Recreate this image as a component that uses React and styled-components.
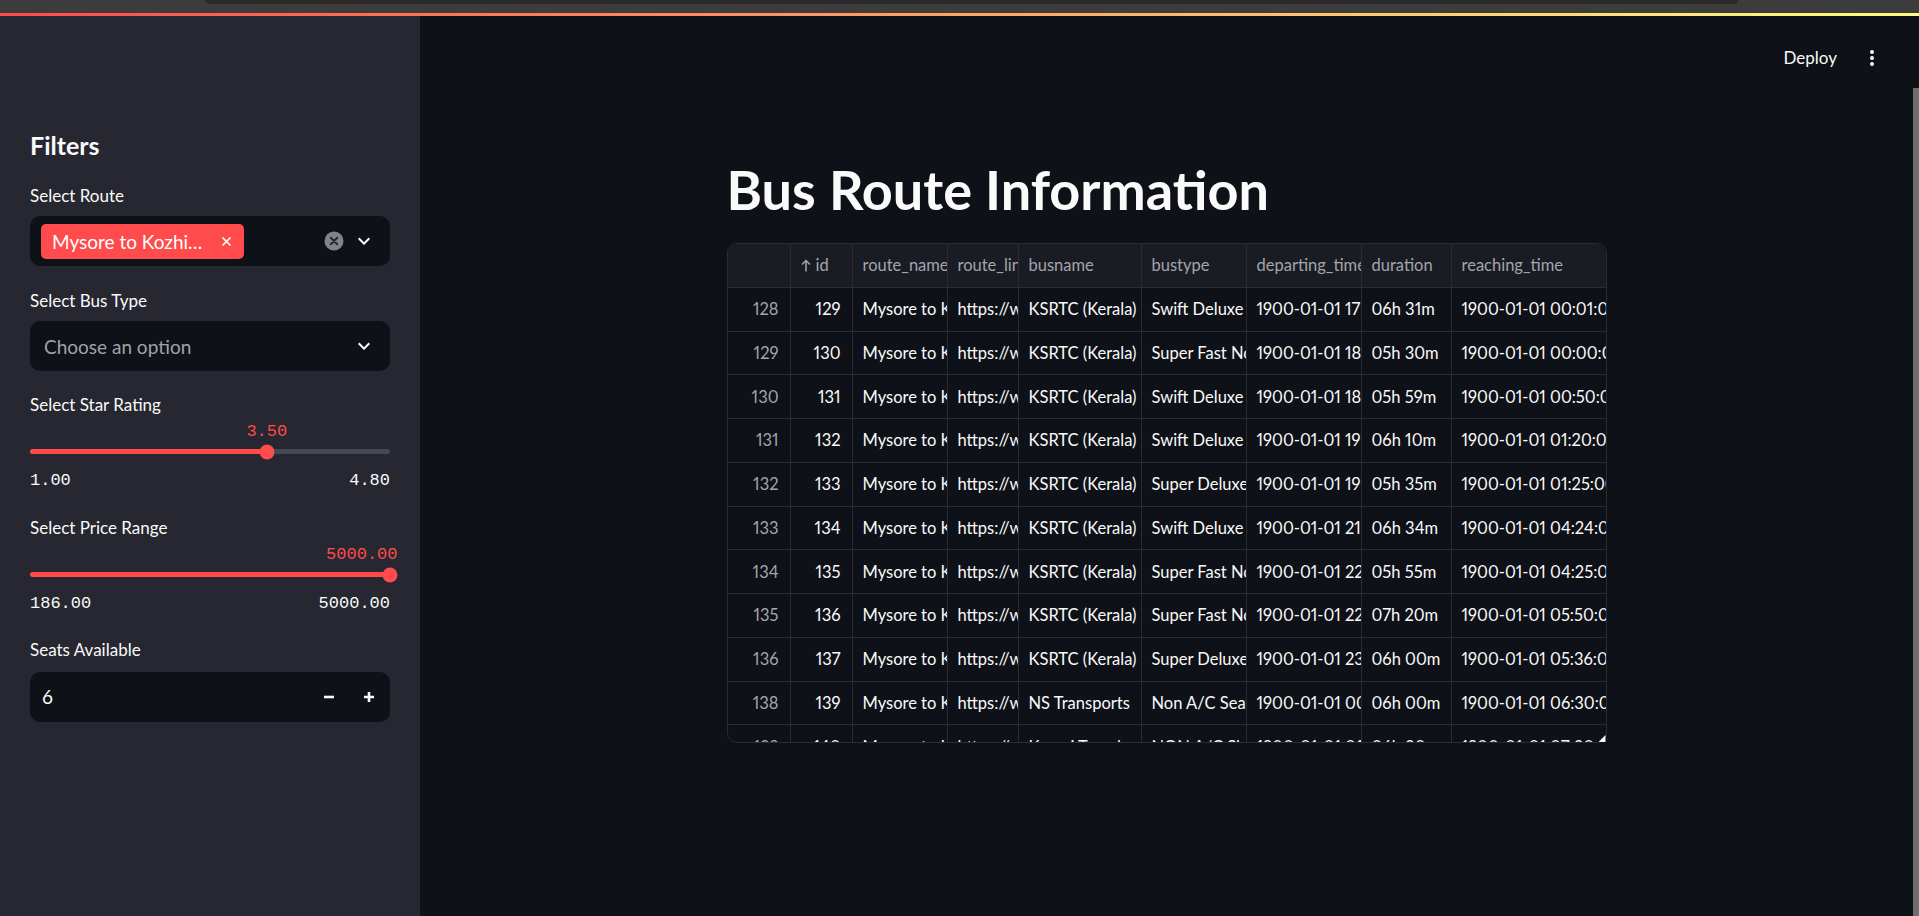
import styled, { createGlobalStyle } from "styled-components";

const GlobalStyles = createGlobalStyle`
  html, body {
    margin: 0;
    padding: 0;
    background: #0e1117;
    overflow: hidden;
  }
  body {
    font-family: Lato, "Liberation Sans", sans-serif;
    color: #fafafa;
  }
  * {
    box-sizing: border-box;
  }
`;

//* browser chrome strip + streamlit decoration line
const BrowserBar = styled.div`
  height: 13px;
  background: #3c3c3c;
  padding: 0 181px 0 205px;
`;

const UrlEdge = styled.div`
  height: 4px;
  background: #2a2a2a;
  border-radius: 0 0 6px 6px;
`;

const Decoration = styled.div`
  height: 3px;
  background: linear-gradient(90deg, #ff4b4b, #fffd80);
`;

const AppBody = styled.div`
  display: flex;
  height: 900px;
`;

//! sidebar
const Sidebar = styled.aside`
  width: 420px;
  flex-shrink: 0;
  background: #262730;
  padding: 114px 30px 0;
  display: flex;
  flex-direction: column;
`;

const SidebarTitle = styled.h2`
  margin: 0;
  font-size: 25px;
  line-height: 30px;
  font-weight: 700;
  color: #fafafa;
`;

const Label = styled.div`
  margin-top: ${(p) => p.$mt}px;
  font-size: 17px;
  line-height: 20px;
  color: #fafafa;
`;

const Field = styled.div`
  margin-top: ${(p) => p.$mt || 10}px;
  height: 50px;
  border-radius: 10px;
  background: #0e1117;
  display: flex;
  align-items: center;
  padding: ${(p) => p.$pad || "0 14px 0 11px"};
`;

const Chip = styled.div`
  width: 203px;
  height: 35px;
  background: #ff4b4b;
  border-radius: 5px;
  display: flex;
  align-items: center;
  padding: 0 12px 0 11px;
  gap: 14px;
  font-size: 19px;
  color: #fff;
`;

const ChipText = styled.span`
  flex: 1;
  min-width: 0;
  white-space: nowrap;
  overflow: hidden;
  text-overflow: ellipsis;
`;

const Spacer = styled.div`
  flex: 1;
`;

const Placeholder = styled.span`
  flex: 1;
  padding-left: 3px;
  font-size: 19px;
  color: #a0a3ab;
`;

const IconGap = styled.div`
  width: 8px;
`;

const SliderBox = styled.div`
  margin-top: 7px;
`;

const ValueRow = styled.div`
  position: relative;
  height: 20px;
`;

const ValueLabel = styled.span`
  position: absolute;
  top: 0;
  font-family: "Liberation Mono", monospace;
  font-size: 17px;
  line-height: 20px;
  color: #ff4b4b;
  white-space: nowrap;
`;

const TrackArea = styled.div`
  position: relative;
  height: 20px;
  display: flex;
  align-items: center;
`;

const Track = styled.div`
  width: 100%;
  height: 5px;
  border-radius: 3px;
  background: linear-gradient(
    to right,
    #ff4b4b 0 ${(p) => p.$pct}%,
    #454955 ${(p) => p.$pct}% 100%
  );
`;

const Thumb = styled.div`
  position: absolute;
  top: 50%;
  width: 15px;
  height: 15px;
  border-radius: 50%;
  background: #ff4b4b;
  transform: translate(-50%, -50%);
`;

const Ticks = styled.div`
  margin-top: 9.5px;
  display: flex;
  justify-content: space-between;
  font-family: "Liberation Mono", monospace;
  font-size: 17px;
  line-height: 20px;
  color: #fafafa;
`;

const NumberValue = styled.span`
  flex: 1;
  font-size: 19px;
  color: #fafafa;
`;

const StepButton = styled.div`
  width: 40px;
  height: 100%;
  display: flex;
  align-items: center;
  justify-content: center;
`;

//! main
const Main = styled.main`
  flex: 1;
  min-width: 0;
  display: flex;
  flex-direction: column;
`;

const TopBar = styled.header`
  height: 75px;
  flex-shrink: 0;
  display: flex;
  justify-content: flex-end;
  align-items: flex-start;
  gap: 33px;
  padding: 31.6px 39px 0 0;
`;

const DeployText = styled.span`
  font-size: 17px;
  line-height: 20px;
  color: #fafafa;
`;

const Dots = styled.svg`
  margin-top: 2.4px;
`;

const Content = styled.div`
  display: flex;
  flex-direction: column;
  align-items: center;
`;

const Title = styled.h1`
  width: 880px;
  margin: 67px 0 0;
  font-size: 54px;
  line-height: 63px;
  font-weight: 700;
  color: #fafafa;
`;

const TableWrap = styled.div`
  position: relative;
  margin-top: 22px;
  width: 880px;
`;

const TableFrame = styled.div`
  height: 500px;
  border: 1px solid #2a2c33;
  border-radius: 10px;
  overflow: hidden;
  background: #0e1117;
`;

const Row = styled.div`
  display: flex;
  height: 43.75px;
  background: ${(p) => (p.$head ? "#1a1c24" : "transparent")};
`;

const Cell = styled.div`
  width: ${(p) => p.$w}px;
  flex-shrink: 0;
  height: 100%;
  display: flex;
  align-items: center;
  justify-content: ${(p) => (p.$right ? "flex-end" : "flex-start")};
  padding: ${(p) => (p.$right ? "0 11px 0 0" : "0 0 0 10px")};
  border-right: 1px solid #2a2c33;
  border-bottom: 1px solid #2a2c33;
  overflow: hidden;
  white-space: nowrap;
  font-size: 16.5px;
  font-variant-numeric: proportional-nums;
  color: ${(p) => (p.$muted ? "#a3a5ab" : "#fafafa")};
`;

const SortArrow = styled.svg`
  margin-right: 5px;
`;

const ResizeHandle = styled.div`
  position: absolute;
  right: 1px;
  bottom: 1px;
  width: 7px;
  height: 7px;
  background: #fafafa;
  clip-path: polygon(100% 0, 100% 100%, 0 100%);
`;

const ScrollRail = styled.div`
  width: 6px;
  flex-shrink: 0;
  padding-top: 72px;
  display: flex;
`;

const ScrollThumb = styled.div`
  flex: 1;
  background: #6e6e6e;
`;

//* icons
const ChevronDown = () => (
  <svg width="24" height="24" viewBox="0 0 24 24">
    <path d="M16.59 8.59 12 13.17 7.41 8.59 6 10l6 6 6-6z" fill="#fafafa" />
  </svg>
);

const ClearIcon = () => (
  <svg width="20" height="20" viewBox="0 0 20 20">
    <circle cx="10" cy="10" r="9.5" fill="#80838c" />
    <path d="M6.8 6.8l6.4 6.4M13.2 6.8l-6.4 6.4" stroke="#262730" strokeWidth="2" strokeLinecap="round" />
  </svg>
);

const ChipClose = () => (
  <svg width="11" height="11" viewBox="0 0 11 11">
    <path d="M1.5 1.5l8 8M9.5 1.5l-8 8" stroke="#fff" strokeWidth="1.7" />
  </svg>
);

const Minus = () => (
  <svg width="12" height="12" viewBox="0 0 12 12">
    <path d="M1 6h10" stroke="#fafafa" strokeWidth="2.6" />
  </svg>
);

const Plus = () => (
  <svg width="12" height="12" viewBox="0 0 12 12">
    <path d="M1 6h10M6 1v10" stroke="#fafafa" strokeWidth="2.6" />
  </svg>
);

const columns = [
  { key: "idx", label: "", w: 63, right: true, muted: true },
  { key: "id", label: "id", w: 62, right: true, sort: true },
  { key: "route_name", label: "route_name", w: 95 },
  { key: "route_link", label: "route_link", w: 71 },
  { key: "busname", label: "busname", w: 123 },
  { key: "bustype", label: "bustype", w: 105 },
  { key: "departing_time", label: "departing_time", w: 115 },
  { key: "duration", label: "duration", w: 90 },
  { key: "reaching_time", label: "reaching_time", w: 175 },
  { key: "star_rating", label: "star_rating", w: 110, right: true },
  { key: "price", label: "price", w: 90, right: true },
  { key: "seats_available", label: "seats_available", w: 150, right: true },
];

const link = "https://www.redbus.in/bus-tickets/mysore-to-kozhikode";

const raw = [
  [128, 129, "KSRTC (Kerala)", "Swift Deluxe Non AC Air Bus (2+2)", "17:29:00", "06h 31m", "00:01:00", 3.4, 491, 30],
  [129, 130, "KSRTC (Kerala)", "Super Fast Non AC Seater Air Bus (2+3)", "18:30:00", "05h 30m", "00:00:00", 3.1, 281, 42],
  [130, 131, "KSRTC (Kerala)", "Swift Deluxe Non AC Air Bus (2+2)", "18:51:00", "05h 59m", "00:50:00", 3.5, 491, 18],
  [131, 132, "KSRTC (Kerala)", "Swift Deluxe Non AC Air Bus (2+2)", "19:10:00", "06h 10m", "01:20:00", 3.3, 491, 25],
  [132, 133, "KSRTC (Kerala)", "Super Deluxe Non AC Seater Air Bus (2+2)", "19:50:00", "05h 35m", "01:25:00", 2.9, 396, 33],
  [133, 134, "KSRTC (Kerala)", "Swift Deluxe Non AC Air Bus (2+2)", "21:50:00", "06h 34m", "04:24:00", 3.2, 491, 14],
  [134, 135, "KSRTC (Kerala)", "Super Fast Non AC Seater Air Bus (2+3)", "22:30:00", "05h 55m", "04:25:00", 3.0, 281, 37],
  [135, 136, "KSRTC (Kerala)", "Super Fast Non AC Seater Air Bus (2+3)", "22:30:00", "07h 20m", "05:50:00", 2.8, 281, 40],
  [136, 137, "KSRTC (Kerala)", "Super Deluxe Non AC Seater Air Bus (2+2)", "23:36:00", "06h 00m", "05:36:00", 3.3, 396, 22],
  [138, 139, "NS Transports", "Non A/C Seater / Sleeper (2+1)", "00:30:00", "06h 00m", "06:30:00", 3.5, 800, 12],
  [139, 140, "Kaveri Travels", "NON A/C Sleeper (2+1)", "01:00:00", "06h 30m", "07:30:00", 3.4, 900, 9],
];

const rows = raw.map(([idx, id, bus, type, dep, dur, reach, star, price, seats]) => ({
  idx,
  id,
  route_name: "Mysore to Kozhikode",
  route_link: link,
  busname: bus,
  bustype: type,
  departing_time: `1900-01-01 ${dep}`,
  duration: dur,
  reaching_time: `1900-01-01 ${reach}`,
  star_rating: star.toFixed(1),
  price: price.toFixed(1),
  seats_available: seats,
}));

function Slider({ label, mt, min, max, value }) {
  const pct = ((value - min) / (max - min)) * 100;
  const labelPos =
    pct > 90 ? { right: -7.5 } : { left: `${pct}%`, transform: "translateX(-50%)" };
  return (
    <>
      <Label $mt={mt}>{label}</Label>
      <SliderBox>
        <ValueRow>
          <ValueLabel style={labelPos}>{value.toFixed(2)}</ValueLabel>
        </ValueRow>
        <TrackArea>
          <Track $pct={pct} />
          <Thumb style={{ left: `${pct}%` }} />
        </TrackArea>
      </SliderBox>
      <Ticks>
        <span>{min.toFixed(2)}</span>
        <span>{max.toFixed(2)}</span>
      </Ticks>
    </>
  );
}

function DataTable() {
  return (
    <TableWrap>
      <TableFrame>
        <Row $head>
          {columns.map((c) => (
            <Cell key={c.key} $w={c.w} $muted>
              {c.sort && (
                <SortArrow width="10" height="13" viewBox="0 0 10 13">
                  <path d="M5 12.5V1.5M1 5.5l4-4 4 4" stroke="#a3a5ab" strokeWidth="1.5" fill="none" />
                </SortArrow>
              )}
              {c.label}
            </Cell>
          ))}
        </Row>
        {rows.map((r) => (
          <Row key={r.idx}>
            {columns.map((c) => (
              <Cell key={c.key} $w={c.w} $right={c.right} $muted={c.muted}>
                {r[c.key]}
              </Cell>
            ))}
          </Row>
        ))}
      </TableFrame>
      <ResizeHandle />
    </TableWrap>
  );
}

function App() {
  return (
    <>
      <GlobalStyles />
      <BrowserBar>
        <UrlEdge />
      </BrowserBar>
      <Decoration />
      <AppBody>
        <Sidebar>
          <SidebarTitle>Filters</SidebarTitle>

          <Label $mt={26}>Select Route</Label>
          <Field>
            <Chip>
              <ChipText>Mysore to Kozhikode</ChipText>
              <ChipClose />
            </Chip>
            <Spacer />
            <ClearIcon />
            <IconGap />
            <ChevronDown />
          </Field>

          <Label $mt={25}>Select Bus Type</Label>
          <Field>
            <Placeholder>Choose an option</Placeholder>
            <ChevronDown />
          </Field>

          <Slider label="Select Star Rating" mt={23.5} min={1} max={4.8} value={3.5} />
          <Slider label="Select Price Range" mt={26.7} min={186} max={5000} value={5000} />

          <Label $mt={26.2}>Seats Available</Label>
          <Field $mt={11.5} $pad="0 1px 0 12px">
            <NumberValue>6</NumberValue>
            <StepButton>
              <Minus />
            </StepButton>
            <StepButton>
              <Plus />
            </StepButton>
          </Field>
        </Sidebar>

        <Main>
          <TopBar>
            <DeployText>Deploy</DeployText>
            <Dots width="4" height="16" viewBox="0 0 4 16">
              <circle cx="2" cy="2" r="2" fill="#fafafa" />
              <circle cx="2" cy="8" r="2" fill="#fafafa" />
              <circle cx="2" cy="14" r="2" fill="#fafafa" />
            </Dots>
          </TopBar>
          <Content>
            <Title>Bus Route Information</Title>
            <DataTable />
          </Content>
        </Main>

        <ScrollRail>
          <ScrollThumb />
        </ScrollRail>
      </AppBody>
    </>
  );
}

export default App;
